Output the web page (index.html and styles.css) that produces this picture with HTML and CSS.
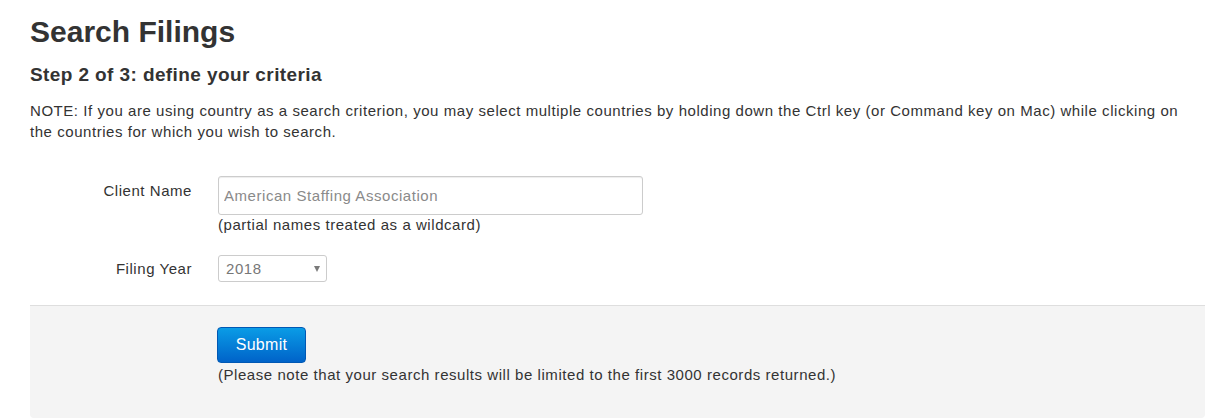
FILE: index.html
```html
<!DOCTYPE html>
<html lang="en">
<head>
<meta charset="utf-8">
<title>Search Filings</title>
<link rel="stylesheet" href="styles.css">
</head>
<body>
<div class="page">
  <h1 class="title">Search Filings</h1>
  <h4 class="step">Step 2 of 3: define your criteria</h4>
  <p class="note">NOTE: If you are using country as a search criterion, you may select multiple countries by holding down the Ctrl key (or Command key on Mac) while clicking on the countries for which you wish to search.</p>

  <form class="form">
    <div class="row row-client">
      <label class="label" for="client">Client Name</label>
      <div class="field">
        <input class="text-input" id="client" type="text" placeholder="American Staffing Association">
        <div class="help">(partial names treated as a wildcard)</div>
      </div>
    </div>
    <div class="row row-year">
      <label class="label" for="year">Filing Year</label>
      <div class="field">
        <span class="select-wrap">
          <select class="select" id="year">
            <option>2018</option>
            <option>2017</option>
            <option>2016</option>
          </select>
        </span>
      </div>
    </div>
    <div class="actions">
      <button class="btn" type="button">Submit</button>
      <div class="limit">(Please note that your search results will be limited to the first 3000 records returned.)</div>
    </div>
  </form>
</div>
</body>
</html>
```

FILE: styles.css
```css
html, body {
  margin: 0;
  padding: 0;
  background: #fff;
}

body {
  font-family: "Liberation Sans", Arial, sans-serif;
  font-size: 15px;
  line-height: 20px;
  color: #333;
  letter-spacing: 0.55px;
}

.page {
  width: 1175px;
  padding: 0 13px 0 30px;
}

.title {
  margin: 15px 0 0;
  font-size: 30px;
  line-height: 33px;
  font-weight: bold;
  letter-spacing: 0;
  color: #333;
}

.step {
  margin: 16px 0 0;
  font-size: 19px;
  line-height: 22px;
  font-weight: bold;
  letter-spacing: 0.4px;
}

.note {
  margin: 14px 0 0;
  line-height: 21px;
}

.form {
  margin: 34px 0 0;
}

.row {
  display: grid;
  grid-template-columns: 162px 1fr;
  column-gap: 26px;
}

.row-year {
  margin-top: 20px;
}

.label {
  text-align: right;
  padding-top: 5px;
  white-space: nowrap;
}

.row-year .label {
  padding-top: 4px;
}

.text-input {
  display: block;
  box-sizing: border-box;
  width: 425px;
  height: 39px;
  margin: 0;
  padding: 0 5px;
  border: 1px solid #ccc;
  border-radius: 3px;
  box-shadow: inset 0 1px 1px rgba(0, 0, 0, 0.075);
  font-family: inherit;
  font-size: 15px;
  letter-spacing: 0.55px;
  color: #555;
  background: #fff;
}

.text-input::placeholder {
  color: #8a8a8a;
  opacity: 1;
}

.help {
  margin-top: 0;
}

.select-wrap {
  position: relative;
  display: inline-block;
}

.select-wrap::after {
  content: "";
  position: absolute;
  top: 11px;
  right: 7px;
  border-left: 3.5px solid transparent;
  border-right: 3.5px solid transparent;
  border-top: 6px solid #7a7a7a;
  pointer-events: none;
}

.select {
  display: block;
  box-sizing: border-box;
  width: 109px;
  height: 27px;
  margin: 0;
  padding: 0 0 0 7px;
  border: 1px solid #ccc;
  border-radius: 3px;
  background: #fff;
  font-family: inherit;
  font-size: 15px;
  letter-spacing: 0.55px;
  color: #777;
  -webkit-appearance: none;
  appearance: none;
}

.actions {
  margin: 23px 0 0;
  padding: 21px 0 33px 188px;
  background: #f4f4f4;
  border-top: 1px solid #dedede;
  border-radius: 0 0 4px 4px;
}

.btn {
  display: block;
  box-sizing: border-box;
  width: 89px;
  height: 36px;
  margin: 0 0 2px -1px;
  padding: 0;
  border: 1px solid #0058b4;
  border-radius: 4px;
  background: linear-gradient(to bottom, #0a9ce6 0%, #0063c9 100%);
  color: #fff;
  font-family: inherit;
  font-size: 16px;
  letter-spacing: 0.3px;
  cursor: pointer;
}
```
